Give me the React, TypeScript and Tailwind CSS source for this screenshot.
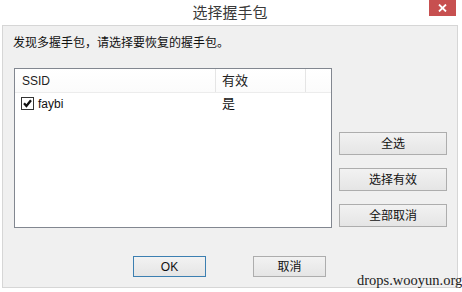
import React from "react";

const font = { fontFamily: '"Liberation Sans", "Noto Sans CJK SC", sans-serif' };

function Btn({ label, className = "" }: { label: string; className?: string }) {
  return (
    <div
      className={`flex items-center justify-center border border-[#adadad] bg-gradient-to-b from-[#f2f2f2] to-[#e5e5e5] text-[12px] text-[#111] ${className}`}
    >
      {label}
    </div>
  );
}

export default function App() {
  return (
    <div className="relative w-[462px] h-[292px] bg-white overflow-hidden" style={font}>
      {/* title bar */}
      <div className="relative h-[25px] flex items-center justify-center">
        <span className="text-[15px] text-[#3a3a3a] leading-none mt-[-1px] ml-[-2px]">选择握手包</span>
        <div className="absolute top-0 left-[429px] w-[27px] h-[16px] bg-[#c75050] flex items-center justify-center">
          <svg width="9" height="8" viewBox="0 0 9 8">
            <path d="M1 0.5 L8 7.5 M8 0.5 L1 7.5" stroke="white" strokeWidth="1.8" />
          </svg>
        </div>
      </div>
      {/* body panel */}
      <div className="ml-[2px] w-[456px] h-[263px] border border-[#d6d6d6] bg-[#f0f0f0] pl-[10px] pt-[9px]">
        <div className="text-[12px] leading-[16px] text-[#111]">发现多握手包，请选择要恢复的握手包。</div>
        <div className="flex mt-[17px]">
          {/* list */}
          <div className="ml-[1px] w-[318px] h-[160px] border border-[#828790] bg-white flex flex-col">
            <div className="flex h-[24px] border-b border-[#ececec] text-[12px] text-[#222] bg-gradient-to-b from-white to-[#fbfbfb]">
              <div className="w-[201px] border-r border-[#e5e5e5] flex items-center pl-[7px]">SSID</div>
              <div className="w-[90px] border-r border-[#e5e5e5] flex items-center pl-[6px] text-[13px]">有效</div>
              <div className="flex-1"></div>
            </div>
            <div className="flex h-[21px] items-center text-[12px] text-[#111]">
              <div className="w-[201px] flex items-center pl-[6px]">
                <div className="w-[13px] h-[13px] border border-[#333] bg-white flex items-center justify-center">
                  <svg width="9" height="9" viewBox="0 0 9 9">
                    <path d="M1 4.3 L3.4 7 L8 1.2" stroke="#111" strokeWidth="2.3" fill="none" />
                  </svg>
                </div>
                <span className="ml-[4px]">faybi</span>
              </div>
              <div className="pl-[6px] text-[13px]">是</div>
            </div>
          </div>
          {/* right buttons */}
          <div className="ml-[7px] mt-[64px] flex flex-col gap-[13px]">
            <Btn label="全选" className="w-[108px] h-[23px]" />
            <Btn label="选择有效" className="w-[108px] h-[23px]" />
            <Btn label="全部取消" className="w-[108px] h-[23px]" />
          </div>
        </div>
        <div className="flex mt-[28px] ml-[120px] gap-[47px]">
          <div className="w-[73px] h-[21px] border border-[#3c7fb1] bg-gradient-to-b from-[#f2f2f2] to-[#e5e5e5] flex items-center justify-center text-[12px] text-[#111]">
            OK
          </div>
          <Btn label="取消" className="w-[73px] h-[21px]" />
        </div>
      </div>
      {/* watermark */}
      <div
        className="absolute left-[357px] top-[271px] text-[14.5px] text-[#222] leading-[18px]"
        style={{ fontFamily: '"Liberation Serif", serif' }}
      >
        drops.wooyun.org
      </div>
    </div>
  );
}
